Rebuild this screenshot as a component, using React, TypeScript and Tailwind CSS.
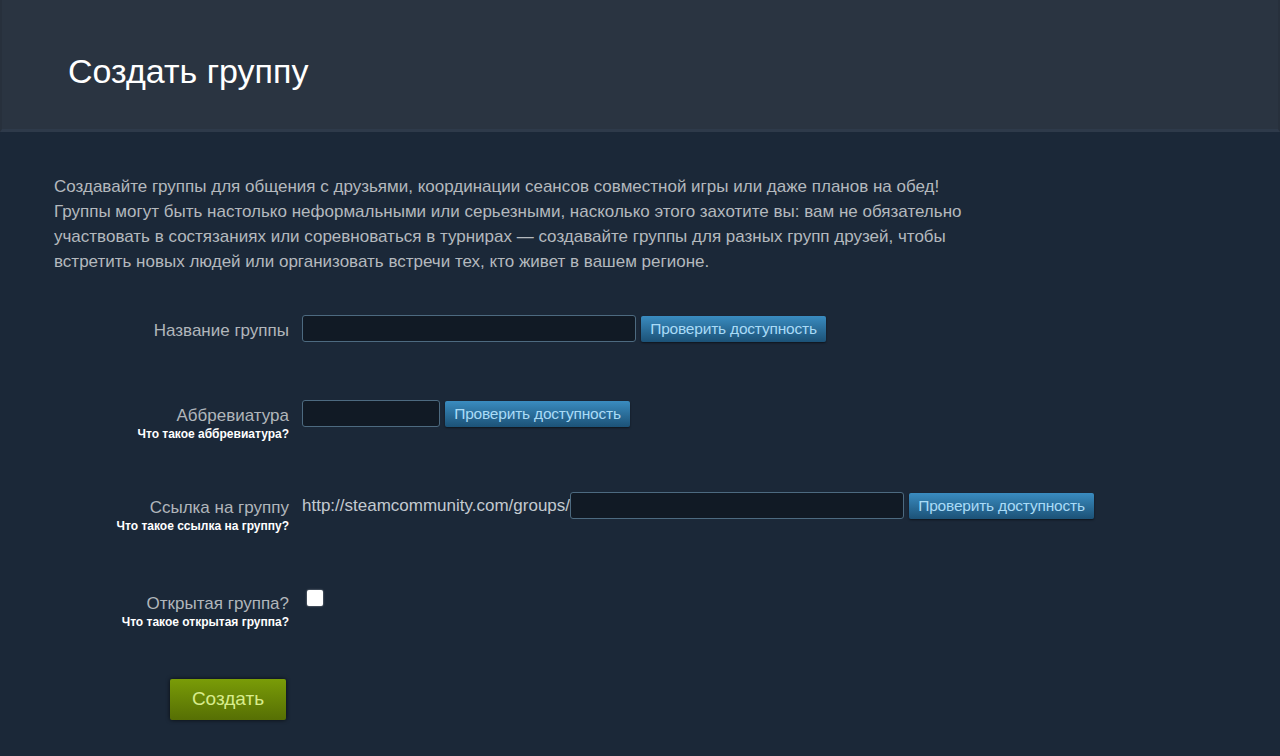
import React from "react";

const font = { fontFamily: '"Liberation Sans", Arial, sans-serif' };

function CheckButton() {
    return (
        <button className="ml-[5px] mt-[1px] h-[26px] w-[185px] rounded-[2px] bg-gradient-to-b from-[#3a8cc0] to-[#1c5277] text-[15.5px] tracking-[-0.2px] text-[#a9dbf7] shadow-[0_1px_2px_rgba(0,0,0,0.5)]">
            Проверить доступность
        </button>
    );
}

interface RowProps {
    label: string;
    help?: string;
    className?: string;
    children: React.ReactNode;
}

function Row({ label, help, className, children }: RowProps) {
    return (
        <div className={"flex items-start " + (className ?? "")}>
            <div className="mt-[2px] w-[235px] shrink-0 text-right">
                <div className="text-[17px] leading-[27px] text-[#b1b6bb]">{label}</div>
                {help && (
                    <div className="-mt-[1px] text-[12px] font-bold leading-[13px] text-white">{help}</div>
                )}
            </div>
            <div className="ml-[13px] flex items-start">{children}</div>
        </div>
    );
}

export default function App() {
    return (
        <div className="min-h-[756px] w-full bg-[#1b2838]" style={font}>
            <header className="h-[132px] w-full border-x-2 border-b-[3px] border-x-[#27303c] border-b-[#2e3a4a] bg-[#2a3441] pl-[66px] pt-[50px]">
                <h1 className="text-[34px] leading-[42px] text-white">Создать группу</h1>
            </header>

            <div className="px-[54px] pt-[42px] pb-[36px]">
                <p className="text-[17px] leading-[25px] text-[#b4b9be]">
                    Создавайте группы для общения с друзьями, координации сеансов совместной игры или даже планов на обед!
                    <br />
                    Группы могут быть настолько неформальными или серьезными, насколько этого захотите вы: вам не обязательно
                    <br />
                    участвовать в состязаниях или соревноваться в турнирах — создавайте группы для разных групп друзей, чтобы
                    <br />
                    встретить новых людей или организовать встречи тех, кто живет в вашем регионе.
                </p>

                <Row label="Название группы" className="mt-[41px]">
                    <input className="h-[27px] w-[334px] rounded-[3px] border border-[#4d6a80] bg-[#111a25] outline-none" />
                    <CheckButton />
                </Row>

                <Row label="Аббревиатура" help="Что такое аббревиатура?" className="mt-[56px]">
                    <input className="h-[27px] w-[138px] rounded-[3px] border border-[#4d6a80] bg-[#111a25] outline-none" />
                    <CheckButton />
                </Row>

                <Row label="Ссылка на группу" help="Что такое ссылка на группу?" className="mt-[51px]">
                    <span className="text-[17px] leading-[27px] text-[#c3cad0]">http://steamcommunity.com/groups/</span>
                    <input className="h-[27px] w-[334px] rounded-[3px] border border-[#4d6a80] bg-[#111a25] outline-none" />
                    <CheckButton />
                </Row>

                <Row label="Открытая группа?" help="Что такое открытая группа?" className="mt-[55px]">
                    <span className="ml-[5px] mt-[2px] block h-[16px] w-[16px] rounded-[2px] bg-white shadow-[0_0_2px_rgba(255,255,255,0.6)]" />
                </Row>

                <div className="mt-[50px] pl-[116px]">
                    <button className="h-[41px] w-[116px] rounded-[2px] bg-gradient-to-b from-[#7a9c08] to-[#566f04] text-[19px] text-[#d8ec8c] shadow-[0_0_4px_rgba(0,0,0,0.7)]">
                        Создать
                    </button>
                </div>
            </div>
        </div>
    );
}
